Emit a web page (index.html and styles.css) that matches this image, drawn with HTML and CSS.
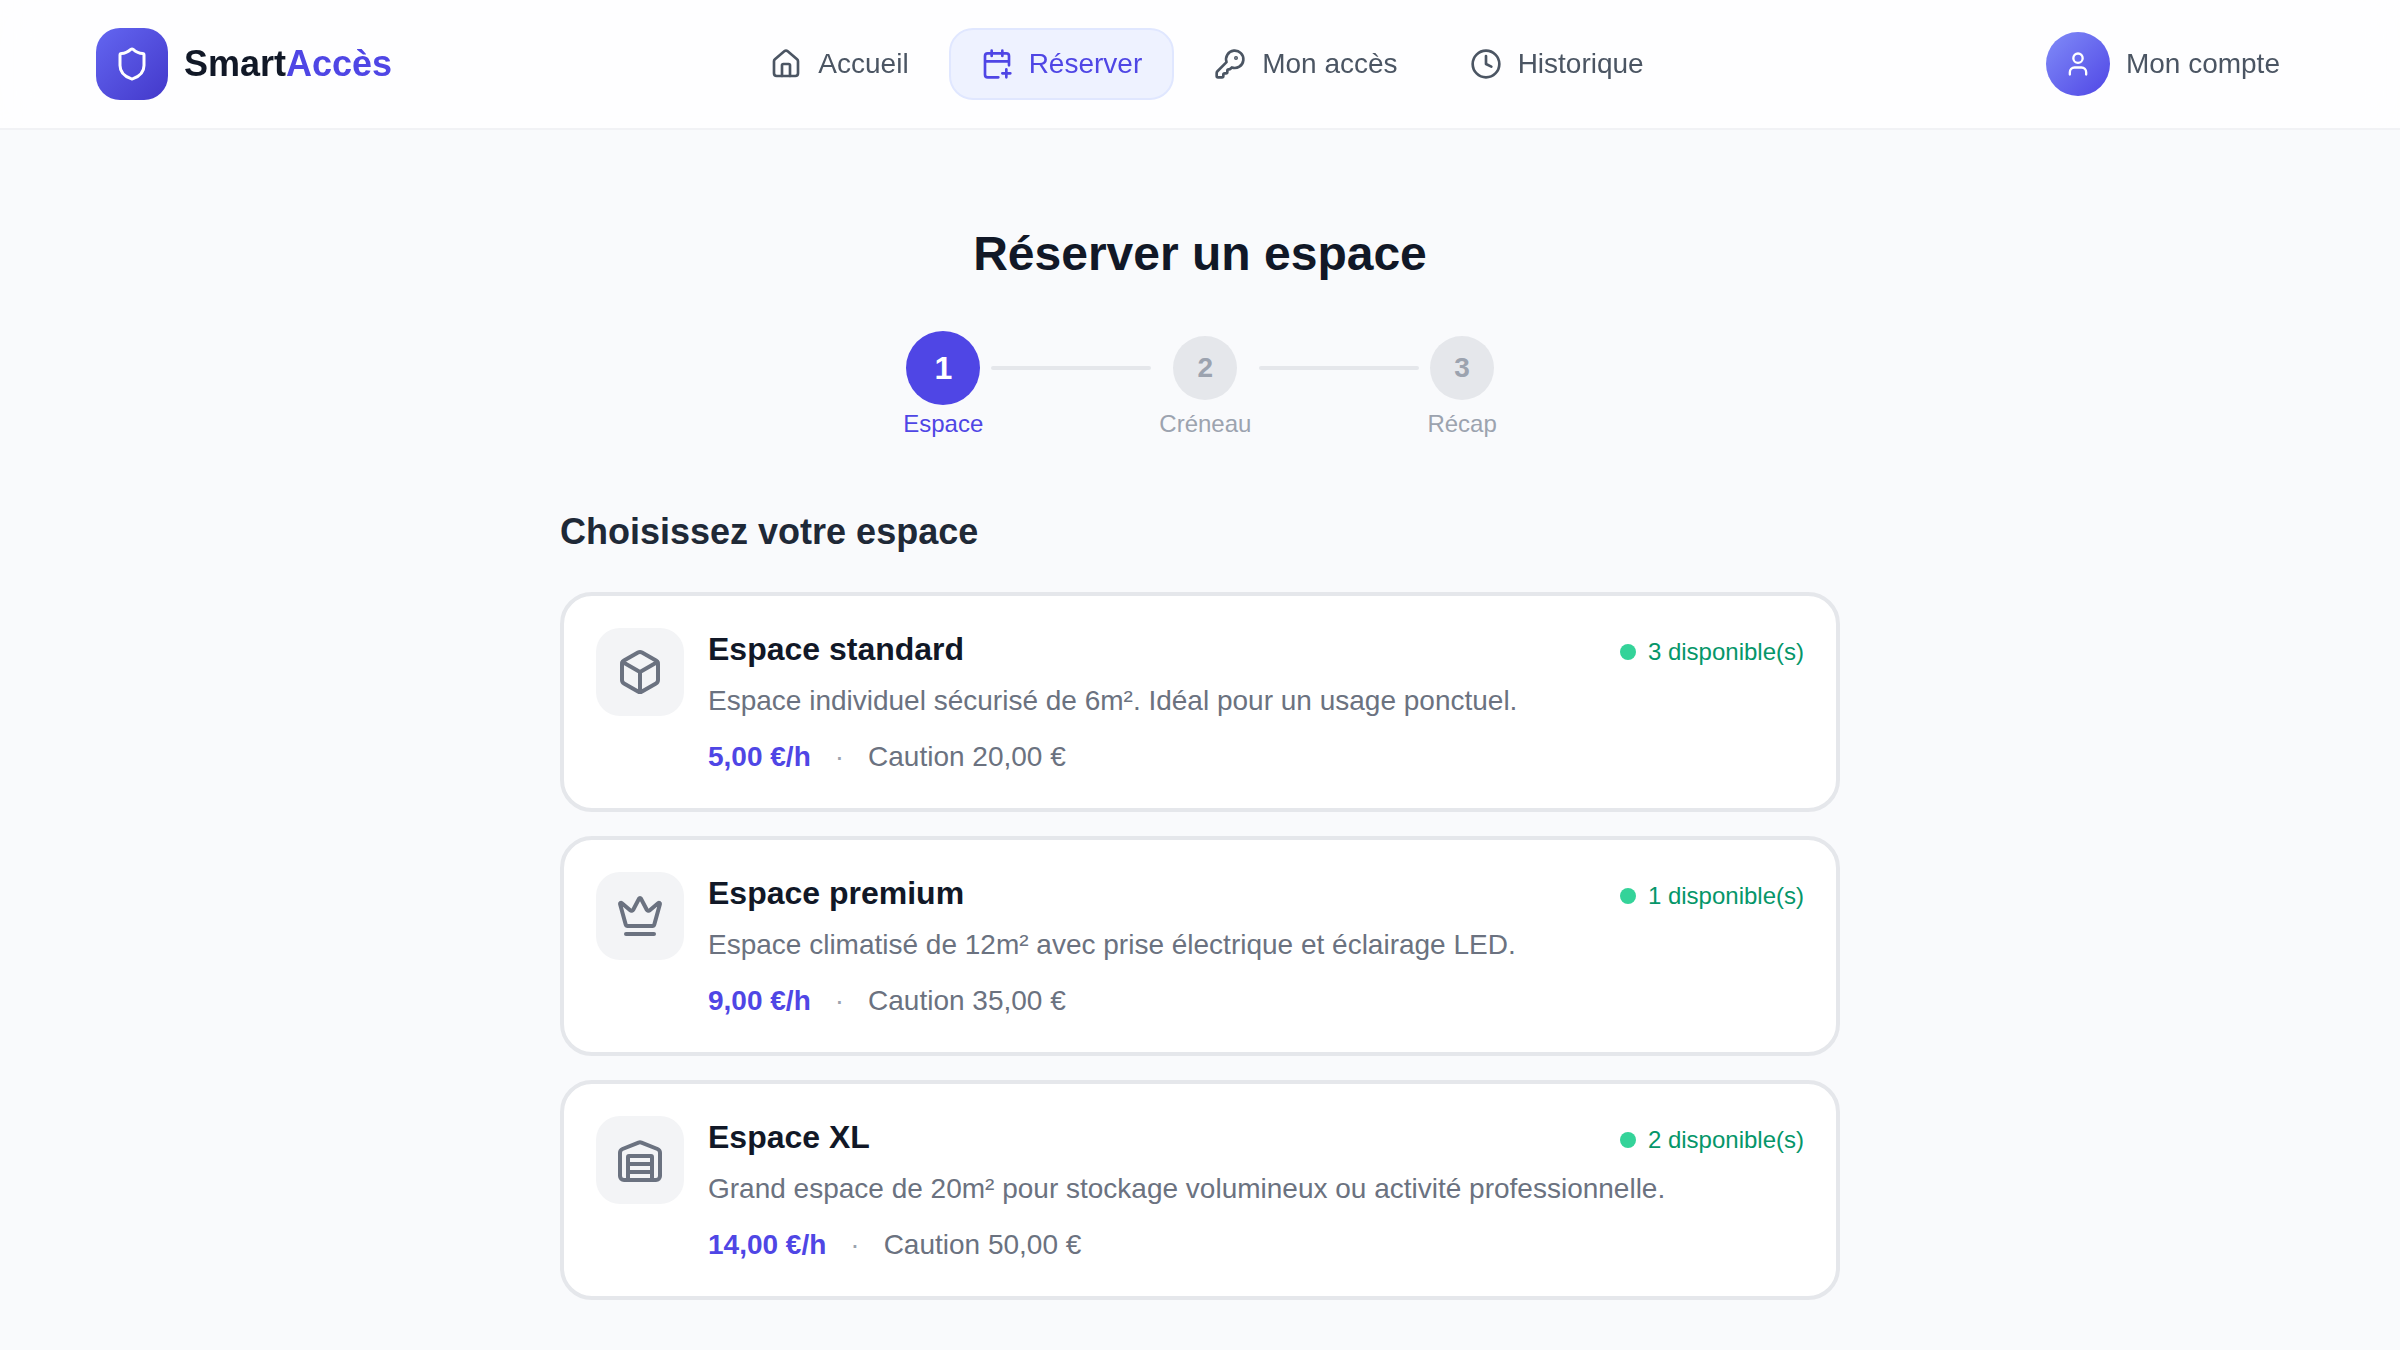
FILE: index.html
```html
<!DOCTYPE html>
<html lang="fr">
<head>
  <meta charset="UTF-8">
  <meta name="viewport" content="width=device-width, initial-scale=1.0">
  <title>SmartAccès - Réserver un espace</title>
  <link rel="stylesheet" href="styles.css">
</head>
<body>
  <header class="header">
    <a class="logo" href="#">
      <span class="logo-icon">
        <svg class="icon icon-36" viewBox="0 0 24 24"><path d="M20 13c0 5-3.5 7.500-7.660 8.950a1 1 0 0 1-.67-.01C7.500 20.500 4 18 4 13V6a1 1 0 0 1 1-1c2 0 4.500-1.200 6.240-2.720a1.170 1.170 0 0 1 1.520 0C14.510 3.810 17 5 19 5a1 1 0 0 1 1 1z"/></svg>
      </span>
      <span class="logo-text">Smart<span class="accent">Accès</span></span>
    </a>

    <nav class="nav">
      <a class="nav-link" href="#">
        <svg class="icon icon-32" viewBox="0 0 24 24"><path d="M15 21v-8a1 1 0 0 0-1-1h-4a1 1 0 0 0-1 1v8"/><path d="M3 10a2 2 0 0 1 .709-1.528l7-5.999a2 2 0 0 1 2.582 0l7 5.999A2 2 0 0 1 21 10v9a2 2 0 0 1-2 2H5a2 2 0 0 1-2-2z"/></svg>
        Accueil
      </a>
      <a class="nav-link active" href="#">
        <svg class="icon icon-32" viewBox="0 0 24 24"><path d="M8 2v4M16 2v4M21 13V6a2 2 0 0 0-2-2H5a2 2 0 0 0-2 2v14a2 2 0 0 0 2 2h8M3 10h18M16 19h6M19 16v6"/></svg>
        Réserver
      </a>
      <a class="nav-link" href="#">
        <svg class="icon icon-32" viewBox="0 0 24 24"><path d="M2.586 17.414A2 2 0 0 0 2 18.828V21a1 1 0 0 0 1 1h3a1 1 0 0 0 1-1v-1a1 1 0 0 1 1-1h1a1 1 0 0 0 1-1v-1a1 1 0 0 1 1-1h.172a2 2 0 0 0 1.414-.586l.814-.814a6.500 6.500 0 1 0-4-4z"/><circle cx="16.500" cy="7.500" r=".5" fill="currentColor"/></svg>
        Mon accès
      </a>
      <a class="nav-link" href="#">
        <svg class="icon icon-32" viewBox="0 0 24 24"><circle cx="12" cy="12" r="10"/><path d="M12 6v6l4 2"/></svg>
        Historique
      </a>
    </nav>

    <button class="account" type="button">
      <span class="avatar">
        <svg class="icon icon-28" viewBox="0 0 24 24"><path d="M19 21v-2a4 4 0 0 0-4-4H9a4 4 0 0 0-4 4v2"/><circle cx="12" cy="7" r="4"/></svg>
      </span>
      Mon compte
    </button>
  </header>

  <main class="container">
    <h1 class="title">Réserver un espace</h1>

    <ol class="steps">
      <li class="step current"><span class="step-number">1</span><span class="step-label">Espace</span></li>
      <li class="step-line" role="presentation"></li>
      <li class="step"><span class="step-number">2</span><span class="step-label">Créneau</span></li>
      <li class="step-line" role="presentation"></li>
      <li class="step"><span class="step-number">3</span><span class="step-label">Récap</span></li>
    </ol>

    <h2 class="subtitle">Choisissez votre espace</h2>

    <div class="spaces">
      <button class="space" type="button">
        <span class="space-icon">
          <svg class="icon icon-48" viewBox="0 0 24 24"><path d="M21 8a2 2 0 0 0-1-1.730l-7-4a2 2 0 0 0-2 0l-7 4A2 2 0 0 0 3 8v8a2 2 0 0 0 1 1.730l7 4a2 2 0 0 0 2 0l7-4A2 2 0 0 0 21 16Z"/><path d="m3.300 7 8.700 5 8.700-5M12 22V12"/></svg>
        </span>
        <span class="space-body">
          <span class="space-head">
            <span class="space-name">Espace standard</span>
            <span class="available">3 disponible(s)</span>
          </span>
          <span class="space-text">Espace individuel sécurisé de 6m². Idéal pour un usage ponctuel.</span>
          <span class="space-price"><strong class="accent">5,00 €/h</strong><span class="sep">·</span><span>Caution 20,00 €</span></span>
        </span>
      </button>

      <button class="space" type="button">
        <span class="space-icon">
          <svg class="icon icon-48" viewBox="0 0 24 24"><path d="M11.562 3.266a.5.5 0 0 1 .876 0L15.390 8.870a1 1 0 0 0 1.516.294L21.183 5.500a.5.5 0 0 1 .798.519l-2.834 10.246a1 1 0 0 1-.956.734H5.810a1 1 0 0 1-.957-.734L2.020 6.020a.5.5 0 0 1 .798-.519l4.276 3.664a1 1 0 0 0 1.516-.294z"/><path d="M5 21h14"/></svg>
        </span>
        <span class="space-body">
          <span class="space-head">
            <span class="space-name">Espace premium</span>
            <span class="available">1 disponible(s)</span>
          </span>
          <span class="space-text">Espace climatisé de 12m² avec prise électrique et éclairage LED.</span>
          <span class="space-price"><strong class="accent">9,00 €/h</strong><span class="sep">·</span><span>Caution 35,00 €</span></span>
        </span>
      </button>

      <button class="space" type="button">
        <span class="space-icon">
          <svg class="icon icon-48" viewBox="0 0 24 24"><path d="M22 8.350V20a2 2 0 0 1-2 2H4a2 2 0 0 1-2-2V8.350A2 2 0 0 1 3.260 6.500l8-3.200a2 2 0 0 1 1.480 0l8 3.200A2 2 0 0 1 22 8.350Z"/><path d="M6 18h12M6 14h12"/><path d="M6 22V10.500a.5.5 0 0 1 .5-.5h11a.5.5 0 0 1 .5.5V22"/></svg>
        </span>
        <span class="space-body">
          <span class="space-head">
            <span class="space-name">Espace XL</span>
            <span class="available">2 disponible(s)</span>
          </span>
          <span class="space-text">Grand espace de 20m² pour stockage volumineux ou activité professionnelle.</span>
          <span class="space-price"><strong class="accent">14,00 €/h</strong><span class="sep">·</span><span>Caution 50,00 €</span></span>
        </span>
      </button>
    </div>
  </main>
</body>
</html>
```
FILE: styles.css
```css
* {
  box-sizing: border-box;
}
body {
  margin: 0;
  font-family: "Liberation Sans", Arial, sans-serif;
  font-size: 28px;
  line-height: 40px;
  color: #111827;
  background-color: #f9fafc;
}
h1, h2, ol {
  margin: 0;
  padding: 0;
}
a {
  color: inherit;
  text-decoration: none;
}
button {
  font: inherit;
  color: inherit;
  text-align: left;
  cursor: pointer;
}
.accent {
  color: #4f46e5;
}

/* Icons */
.icon {
  flex-shrink: 0;
  fill: none;
  stroke: currentColor;
  stroke-width: 2;
  stroke-linecap: round;
  stroke-linejoin: round;
}
.icon-28 {
  width: 28px;
  height: 28px;
}
.icon-32 {
  width: 32px;
  height: 32px;
}
.icon-36 {
  width: 36px;
  height: 36px;
}
.icon-48 {
  width: 48px;
  height: 48px;
}

/* Header */
.header {
  position: sticky;
  top: 0;
  z-index: 10;
  display: flex;
  align-items: center;
  justify-content: space-between;
  padding: 28px 96px;
  background: rgba(255, 255, 255, 0.8);
  backdrop-filter: blur(24px);
  border-bottom: 2px solid #f1f2f5;
}
.logo {
  display: flex;
  align-items: center;
  gap: 16px;
}
.logo-icon {
  display: flex;
  align-items: center;
  justify-content: center;
  width: 72px;
  height: 72px;
  border-radius: 24px;
  color: #fff;
  background: linear-gradient(135deg, #6366f1, #4338ca);
}
.logo-text {
  font-size: 36px;
  font-weight: bold;
}
.nav {
  display: flex;
  gap: 8px;
}
.nav-link {
  display: flex;
  align-items: center;
  gap: 16px;
  padding: 14px 30px;
  border: 2px solid transparent;
  border-radius: 24px;
  color: #4b5563;
}
.nav-link.active {
  color: #4f46e5;
  background: #eef2ff;
  border-color: #e0e7ff;
}
.account {
  display: flex;
  align-items: center;
  gap: 16px;
  padding: 0 24px;
  border: none;
  background: none;
  color: #4b5563;
}
.avatar {
  display: flex;
  align-items: center;
  justify-content: center;
  width: 64px;
  height: 64px;
  border-radius: 50%;
  color: #fff;
  background: linear-gradient(135deg, #818cf8, #4f46e5);
}

/* Page */
.container {
  max-width: 1376px;
  margin: 0 auto;
  padding: 96px 48px 48px;
}
.title {
  font-size: 48px;
  line-height: 56px;
  text-align: center;
}
.subtitle {
  margin-bottom: 32px;
  font-size: 36px;
  line-height: 56px;
  color: #1f2937;
}

/* Steps */
.steps {
  display: flex;
  justify-content: center;
  gap: 8px;
  margin: 54px 0 64px;
  list-style: none;
}
.step {
  display: flex;
  flex-direction: column;
  align-items: center;
  gap: 8px;
  color: #9ca3af;
}
.step-number {
  display: flex;
  align-items: center;
  justify-content: center;
  width: 64px;
  height: 64px;
  border-radius: 50%;
  font-weight: bold;
  background: #e5e7eb;
}
.step-label {
  font-size: 24px;
  line-height: 32px;
}
.step.current {
  color: #4f46e5;
}
.step.current .step-number {
  width: 74px;
  height: 74px;
  margin: -5px 0;
  font-size: 32px;
  color: #fff;
  background: #4f46e5;
}
.step-line {
  width: 160px;
  height: 4px;
  margin-top: 30px;
  border-radius: 2px;
  background: #e5e7eb;
}

/* Spaces */
.spaces {
  display: flex;
  flex-direction: column;
  gap: 24px;
}
.space {
  display: flex;
  align-items: flex-start;
  gap: 24px;
  padding: 32px;
  border: 4px solid #e5e7eb;
  border-radius: 32px;
  background: #fff;
}
.space-icon {
  display: flex;
  align-items: center;
  justify-content: center;
  width: 88px;
  height: 88px;
  border-radius: 24px;
  color: #6b7280;
  background: #f3f4f6;
}
.space-body {
  flex: 1;
  display: flex;
  flex-direction: column;
}
.space-head {
  display: flex;
  align-items: baseline;
  justify-content: space-between;
  margin-bottom: 10px;
}
.space-name {
  font-size: 32px;
  font-weight: bold;
  line-height: 42px;
}
.available {
  display: flex;
  align-items: center;
  gap: 12px;
  font-size: 24px;
  line-height: 32px;
  color: #059669;
}
.available::before {
  content: "";
  width: 16px;
  height: 16px;
  border-radius: 50%;
  background: #34d399;
}
.space-text {
  margin-bottom: 16px;
  line-height: 42px;
  color: #6b7280;
}
.space-price {
  display: flex;
  gap: 24px;
  line-height: 38px;
  color: #6b7280;
}
.sep {
  color: #9ca3af;
}
```
